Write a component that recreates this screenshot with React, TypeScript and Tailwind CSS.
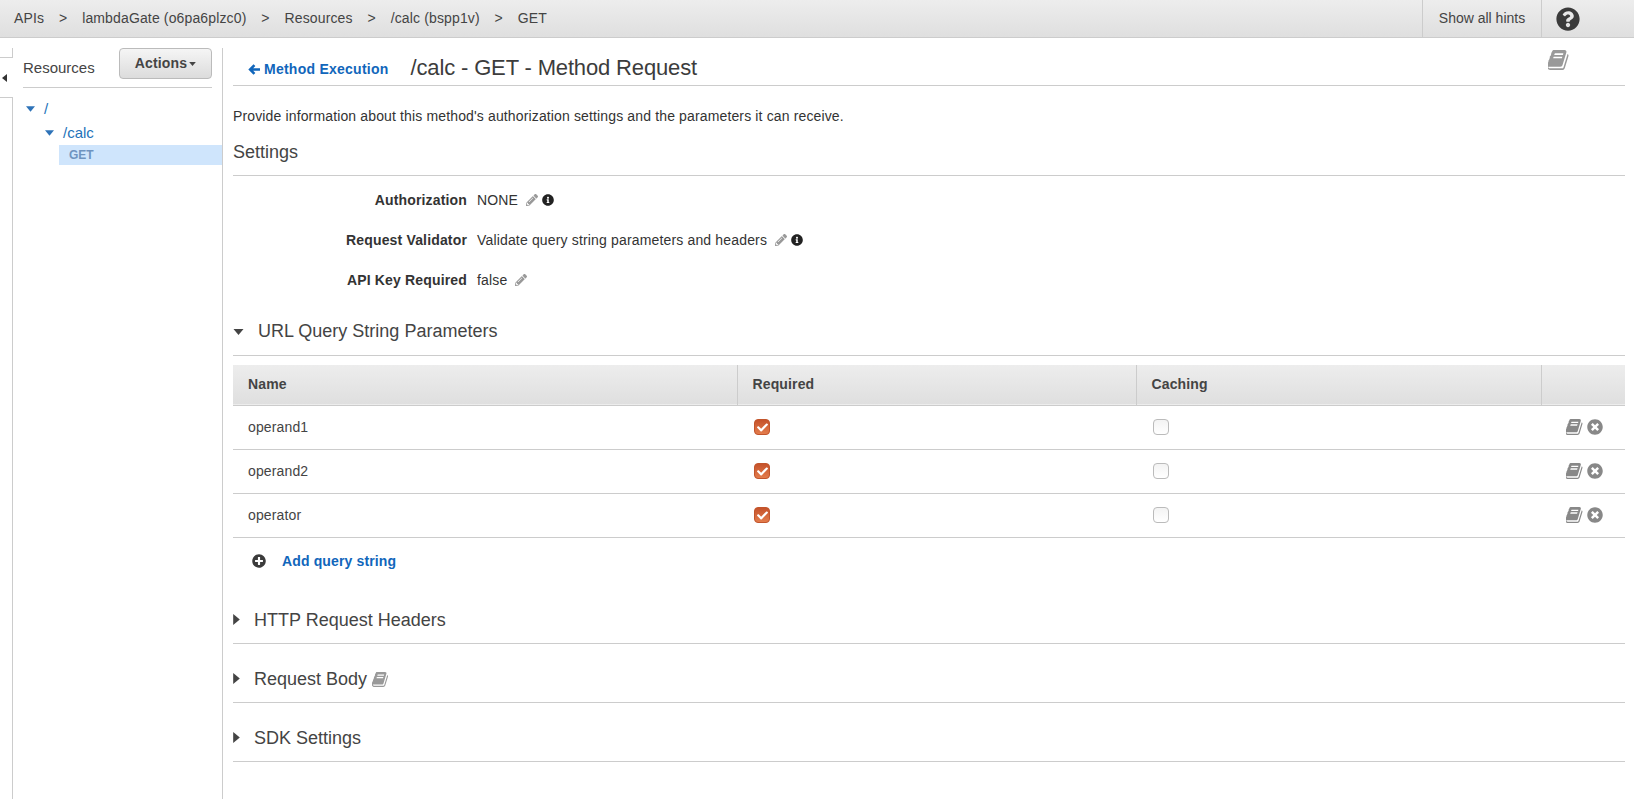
import { FaCheck, FaInfoCircle, FaPencilAlt, FaPlusCircle, FaQuestionCircle, FaTimesCircle } from 'react-icons/fa';

const crumbs = ['APIs', 'lambdaGate (o6pa6plzc0)', 'Resources', '/calc (bspp1v)', 'GET'];
const params = ['operand1', 'operand2', 'operator'];

// the slanted book from the older icon set, react-icons only has the upright one
function BookIcon({ className }: { className: string }) {
  return (
    <svg viewBox="128 128 1536 1536" className={className} fill="currentColor">
      <path d="M1639 478q40 57 18 129l-275 906q-19 64-76.500 107.500t-122.500 43.500h-923q-77 0-148.500-53.500t-99.500-131.500q-24-67-2-127 0-4 3-27t4-37q1-8-3-21.500t-3-19.500q2-11 8-21t16.500-23.500 16.500-23.500q23-38 45-91.500t30-91.500q3-10 .5-30t-.5-28q3-11 17-28t17-23q21-36 42-92t25-90q1-9-2.500-32t.5-28q4-13 22-30.500t22-22.500q19-26 42.500-84.500t27.500-96.500q1-8-3-25.500t-2-26.500q2-8 9-18t18-23 17-21q8-12 16.500-30.500t15-35 16-36 19.500-32 26.500-23.500 36-11.500 47.500 5.500l-1 3q38-9 51-9h761q74 0 114 56t18 130l-274 906q-36 119-71.500 153.500t-128.500 34.500h-869q-27 0-38 15-11 16-1 43 24 70 144 70h923q29 0 56-15.500t35-41.500l300-987q7-22 5-57 38 15 59 43zm-1064 2q-4 13 2 22.500t20 9.500h608q13 0 25.500-9.500t16.500-22.500l21-64q4-13-2-22.500t-20-9.500h-608q-13 0-25.500 9.500t-16.500 22.500zm-83 256q-4 13 2 22.500t20 9.500h608q13 0 25.500-9.500t16.500-22.500l21-64q4-13-2-22.500t-20-9.500h-608q-13 0-25.500 9.500t-16.500 22.500z" />
    </svg>
  );
}

function ArrowLeftIcon() {
  return (
    <svg viewBox="0 0 14 12" className="w-[12px] h-[11px] mr-[4px]" fill="none" stroke="currentColor" strokeWidth="3">
      <path d="M14 6H3M7.500 1 2.500 6l5 5" />
    </svg>
  );
}

function CaretDown({ className }: { className: string }) {
  return (
    <svg viewBox="0 0 10 6" className={className}>
      <path d="M0 0h10L5 6z" fill="currentColor" />
    </svg>
  );
}

function CaretRight() {
  return (
    <svg viewBox="0 0 6 10" className="w-[7px] h-[11px] text-[#444]">
      <path d="M0 0v10l6-5z" fill="currentColor" />
    </svg>
  );
}

function Section({ title, book }: { title: string; book?: boolean }) {
  return (
    <div className="h-[59px] pt-[23px] border-b border-[#ccc] flex items-start">
      <span className="mt-[6px]"><CaretRight /></span>
      <span className="ml-[14px] text-[18px] leading-[24px] text-[#444]">{title}</span>
      {book && <BookIcon className="ml-[5px] mt-[5px] w-[17px] h-[15px] text-[#999]" />}
    </div>
  );
}

function SettingRow({ label, value, info }: { label: string; value: string; info?: boolean }) {
  return (
    <div className="h-[40px] flex items-center text-[14px] tracking-[0.16px] text-[#333]">
      <div className="w-[234px] text-right font-bold">{label}</div>
      <div className="ml-[10px]">{value}</div>
      <FaPencilAlt className="ml-[8px] w-[12px] h-[12px] text-[#999]" />
      {info && <FaInfoCircle className="ml-[4px] w-[12px] h-[12px] text-[#222]" />}
    </div>
  );
}

export default function App() {
  return (
    <div className="h-[799px] overflow-hidden bg-white text-[#333] font-['Liberation_Sans',Arial,sans-serif]">
      <header className="h-[38px] flex items-stretch bg-gradient-to-b from-[#ededed] to-[#dfdfdf] border-b border-[#ccc]">
        <nav className="flex-1 flex items-center pl-[14px] text-[14px] tracking-[0.14px] text-[#444]">
          {crumbs.map((crumb, i) => (
            <span key={crumb} className="flex items-center">
              {i > 0 && <span className="w-[38px] text-center">&gt;</span>}
              <span>{crumb}</span>
            </span>
          ))}
        </nav>
        <div className="w-[120px] flex items-center justify-center border-l border-r border-[#ccc] text-[14px] text-[#444]">
          Show all hints
        </div>
        <div className="w-[92px] pl-[14px] flex items-center">
          <FaQuestionCircle className="w-[24px] h-[24px] text-[#3b3b3b]" />
        </div>
      </header>

      <div className="flex h-[761px]">
        <div className="w-[13px] pt-[10px] flex flex-col shrink-0">
          <div className="h-[10px] border-r border-b border-[#ccc]" />
          <div className="h-[39px] flex items-center justify-start pl-[2px]">
            <svg viewBox="0 0 5 8" className="w-[5px] h-[8px] text-[#333]">
              <path d="M5 0v8L0 4z" fill="currentColor" />
            </svg>
          </div>
          <div className="flex-1 border-r border-t border-[#ccc]" />
        </div>

        <aside className="w-[200px] ml-[10px] mt-[10px] border-r border-[#ccc] shrink-0">
          <div className="w-[189px] h-[40px] border-b border-[#ccc] flex items-start justify-between">
            <span className="mt-[10px] text-[15px] leading-[20px] text-[#444]">Resources</span>
            <button className="w-[93px] h-[31px] rounded-[4px] border border-[#bbb] bg-gradient-to-b from-[#f5f5f5] to-[#dcdcdc] flex items-center justify-center text-[14px] tracking-[0.14px] font-bold text-[#444]">
              Actions
              <CaretDown className="ml-[2px] w-[7px] h-[4px] text-[#444]" />
            </button>
          </div>
          <div className="mt-[9px] text-[15px] text-[#2272b9]">
            <div className="h-[24px] flex items-center pl-[3px]">
              <CaretDown className="w-[9px] h-[6px] text-[#2e73b8]" />
              <span className="ml-[9px]">/</span>
            </div>
            <div className="h-[24px] flex items-center pl-[22px]">
              <CaretDown className="w-[9px] h-[6px] text-[#2e73b8]" />
              <span className="ml-[9px]">/calc</span>
            </div>
            <div className="ml-[36px] h-[20px] bg-[#cfe5fc] pl-[10px] flex items-center text-[12px] font-bold text-[#6f94c0]">
              GET
            </div>
          </div>
        </aside>

        <main className="w-[1392px] ml-[10px] shrink-0">
          <div className="h-[48px] pt-[16px] border-b border-[#ccc] flex items-start relative">
            <a className="ml-[15px] mt-[6px] flex items-center text-[14px] tracking-[0.25px] leading-[18px] font-bold text-[#1166bb]">
              <ArrowLeftIcon />
              Method Execution
            </a>
            <h1 className="ml-[22px] text-[22px] tracking-[-0.15px] leading-[28px] text-[#3c3c3c]">/calc - GET - Method Request</h1>
            <BookIcon className="absolute right-[56px] top-[12px] w-[21px] h-[20px] text-[#999]" />
          </div>

          <p className="mt-[20px] text-[14px] tracking-[0.14px] leading-[20px] text-[#333]">
            Provide information about this method's authorization settings and the parameters it can receive.
          </p>

          <div className="mt-[14px] h-[36px] border-b border-[#ccc] text-[18px] leading-[24px] text-[#444]">Settings</div>

          <div className="mt-[4px]">
            <SettingRow label="Authorization" value="NONE" info />
            <SettingRow label="Request Validator" value="Validate query string parameters and headers" info />
            <SettingRow label="API Key Required" value="false" />
          </div>

          <div className="mt-[19px] h-[37px] border-b border-[#ccc] flex items-start">
            <CaretDown className="mt-[10px] w-[11px] h-[6px] text-[#444]" />
            <span className="ml-[14px] text-[18px] leading-[24px] text-[#444]">URL Query String Parameters</span>
          </div>

          <table className="mt-[9px] w-full table-fixed border-collapse text-[14px] tracking-[0.14px] text-[#444]">
            <thead>
              <tr className="h-[40px] bg-gradient-to-b from-[#ededed] to-[#dfdfdf] border-b border-[#ccc]">
                <th className="w-[504px] pl-[15px] text-left font-bold">Name</th>
                <th className="w-[399px] pl-[15px] text-left font-bold border-l border-[#ccc]">Required</th>
                <th className="w-[405px] pl-[15px] text-left font-bold border-l border-[#ccc]">Caching</th>
                <th className="border-l border-[#ccc]" />
              </tr>
            </thead>
            <tbody>
              {params.map((name) => (
                <tr key={name} className="h-[44px] border-b border-[#ccc]">
                  <td className="pl-[15px]">{name}</td>
                  <td className="pl-[17px]">
                    <span className="w-[16px] h-[16px] rounded-[4px] bg-gradient-to-b from-[#c5522a] to-[#e37c4c] border border-[#c2552c] flex items-center justify-center">
                      <FaCheck className="w-[11px] h-[11px] text-white" />
                    </span>
                  </td>
                  <td className="pl-[17px]">
                    <span className="block w-[16px] h-[16px] rounded-[4px] bg-gradient-to-b from-[#f3f3f3] to-white border border-[#bbb]" />
                  </td>
                  <td>
                    <div className="flex items-center justify-end pr-[22px]">
                      <BookIcon className="w-[17px] h-[16px] text-[#888]" />
                      <FaTimesCircle className="ml-[4px] w-[16px] h-[16px] text-[#888]" />
                    </div>
                  </td>
                </tr>
              ))}
            </tbody>
          </table>

          <div className="h-[47px] pl-[19px] flex items-center">
            <FaPlusCircle className="w-[14px] h-[14px] text-[#3b3b3b]" />
            <a className="ml-[16px] text-[14px] tracking-[0.14px] font-bold text-[#1166bb]">Add query string</a>
          </div>

          <Section title="HTTP Request Headers" />
          <Section title="Request Body" book />
          <Section title="SDK Settings" />
        </main>
      </div>
    </div>
  );
}
